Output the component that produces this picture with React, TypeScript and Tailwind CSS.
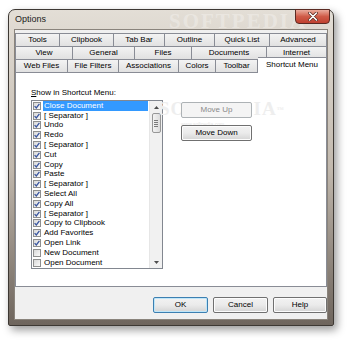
import React from 'react'

const rowOne = [
    { label: 'Tools', w: 'w-[45px]' },
    { label: 'Clipbook', w: 'w-[54px]' },
    { label: 'Tab Bar', w: 'w-[51px]' },
    { label: 'Outline', w: 'w-[50px]' },
    { label: 'Quick List', w: 'w-[55px]' },
    { label: 'Advanced', w: 'w-[57px]' },
]

const rowTwo = [
    { label: 'View', w: 'w-[58px]' },
    { label: 'General', w: 'w-[62px]' },
    { label: 'Files', w: 'w-[57px]' },
    { label: 'Documents', w: 'w-[75px]' },
    { label: 'Internet', w: 'w-[60px]' },
]

const rowThree = [
    { label: 'Web Files', w: 'w-[53px]' },
    { label: 'File Filters', w: 'w-[51px]' },
    { label: 'Associations', w: 'w-[60px]' },
    { label: 'Colors', w: 'w-[37px]' },
    { label: 'Toolbar', w: 'w-[42px]' },
]

const items = [
    { label: 'Close Document', checked: true },
    { label: '[ Separator ]', checked: true },
    { label: 'Undo', checked: true },
    { label: 'Redo', checked: true },
    { label: '[ Separator ]', checked: true },
    { label: 'Cut', checked: true },
    { label: 'Copy', checked: true },
    { label: 'Paste', checked: true },
    { label: '[ Separator ]', checked: true },
    { label: 'Select All', checked: true },
    { label: 'Copy All', checked: true },
    { label: '[ Separator ]', checked: true },
    { label: 'Copy to Clipbook', checked: true },
    { label: 'Add Favorites', checked: true },
    { label: 'Open Link', checked: true },
    { label: 'New Document', checked: false },
    { label: 'Open Document', checked: false },
]

function TabRow({ tabs, children }: { tabs: { label: string; w: string }[]; children?: React.ReactNode }) {
    return (
        <div className="flex h-[13px] items-start">
            {tabs.map((t, i) => (
                <div
                    key={t.label}
                    className={`${t.w} h-[13px] flex items-center justify-center border-t border-r border-[#898c95] bg-gradient-to-b from-[#f3f3f3] to-[#e1e1e1] text-[8px] leading-none ${i === 0 ? 'border-l' : ''}`}
                >
                    {t.label}
                </div>
            ))}
            {children}
        </div>
    )
}

function CheckBox({ checked }: { checked: boolean }) {
    return (
        <span className="w-[8px] h-[8px] shrink-0 border border-[#8e8f8f] bg-gradient-to-br from-[#d8d8d8] to-[#fbfbfb] flex items-center justify-center">
            {checked && (
                <svg width="6" height="6" viewBox="0 0 6 6">
                    <path d="M0.6 3.1 L2.3 4.9 L5.4 0.9" stroke="#3a57a0" strokeWidth="1.3" fill="none" />
                </svg>
            )}
        </span>
    )
}

function WinButton({ children, disabled, primary, className }: { children: React.ReactNode; disabled?: boolean; primary?: boolean; className?: string }) {
    const tone = disabled
        ? 'border-[#adb2b5] bg-[#f4f4f4] text-[#8a8a8a]'
        : primary
          ? 'border-[#3c7fb1] bg-gradient-to-b from-[#f2f2f2] via-[#ebebeb] to-[#d4d4d4] shadow-[inset_0_0_0_1px_#bfe6f9] text-black'
          : 'border-[#707070] bg-gradient-to-b from-[#f2f2f2] via-[#ebebeb] to-[#d4d4d4] shadow-[inset_0_0_0_1px_#fcfcfc] text-black'
    return (
        <div className={`h-[16px] rounded-[2px] border flex items-center justify-center text-[8px] leading-none ${tone} ${className ?? ''}`}>
            {children}
        </div>
    )
}

export default function App() {
    return (
        <div className="w-[350px] h-[341px] bg-white pl-[8px] pt-[9px] overflow-hidden font-['Liberation_Sans',Arial,sans-serif] text-black">
            <div className="w-[326px] h-[317px] rounded-t-[7px] rounded-b-[2px] border border-[#3d3833] bg-gradient-to-b from-[#e3ded6] via-[#c2b9ae] to-[#6e655d] shadow-[3px_4px_8px_rgba(0,0,0,0.4)] flex flex-col">

                {/* title bar */}
                <div className="h-[19px] flex justify-between relative">
                    <span className="pl-[6px] pt-[5px] text-[9px] leading-none text-[#1b1b1b]">Options</span>
                    <span className="absolute left-[160px] top-[1px] text-[21px] leading-none font-bold tracking-[2px] text-white/30 font-['Liberation_Serif',serif]">SOFTPEDIA</span>
                    <div className="mr-[3px] -mt-[1px] w-[35px] h-[15px] rounded-b-[4px] border border-[#5a2a22] bg-gradient-to-b from-[#e9ab9d] via-[#cf5b48] to-[#c0402f] flex items-center justify-center relative">
                        <svg width="10" height="9" viewBox="0 0 10 9">
                            <path d="M1.5 1 L8.5 8 M8.5 1 L1.5 8" stroke="#5a2a22" strokeWidth="3" strokeLinecap="round" />
                            <path d="M1.5 1 L8.5 8 M8.5 1 L1.5 8" stroke="#ffffff" strokeWidth="1.6" strokeLinecap="round" />
                        </svg>
                    </div>
                </div>

                {/* client area */}
                <div className="mx-[5px] w-[314px] h-[291px] border border-[#8a847c] bg-[#f0f0f0] pt-[3px] flex flex-col">
                    <div className="flex flex-col">
                        <TabRow tabs={rowOne} />
                        <TabRow tabs={rowTwo} />
                        <TabRow tabs={rowThree}>
                            <div className="w-[69px] h-[16px] -mt-[2px] relative z-10 bg-white border-t border-r border-[#898c95] flex items-center justify-center text-[8px] leading-none pb-[1px]">
                                Shortcut Menu
                            </div>
                        </TabRow>
                    </div>

                    <div className="h-[215px] border border-[#898c95] bg-white pl-[15px] pt-[15px] relative">
                        <div className="h-[10px] text-[8px] leading-[10px]">
                            <span className="underline">S</span>how in Shortcut Menu:
                        </div>
                        <div className="flex mt-[2px]">
                            <div className="w-[132px] h-[169px] border border-[#828790] flex">
                                <div className="w-[117px] flex flex-col">
                                    {items.map((it, i) => (
                                        <div key={i} className="h-[9.8px] flex items-center pl-[1px] text-[8px] leading-none">
                                            <CheckBox checked={it.checked} />
                                            <span className={`ml-[2px] mr-[1px] flex-1 h-full flex items-center pl-[1px] ${i === 0 ? 'bg-[#3399ff] text-white' : ''}`}>
                                                {it.label}
                                            </span>
                                        </div>
                                    ))}
                                </div>
                                <div className="w-[13px] bg-[#f1f1f1] border-l border-[#e6e6e6] flex flex-col items-center">
                                    <div className="h-[12px] w-full flex items-center justify-center">
                                        <svg width="5" height="3" viewBox="0 0 5 3"><path d="M0 3 L2.5 0 L5 3 Z" fill="#4d4d4d" /></svg>
                                    </div>
                                    <div className="w-[9px] h-[20px] rounded-[2px] border border-[#979797] bg-gradient-to-r from-[#f3f3f3] to-[#dcdcdc] flex flex-col items-center justify-center gap-[1px]">
                                        <span className="w-[4px] h-[1px] bg-[#7a7a7a]" />
                                        <span className="w-[4px] h-[1px] bg-[#7a7a7a]" />
                                        <span className="w-[4px] h-[1px] bg-[#7a7a7a]" />
                                        <span className="w-[4px] h-[1px] bg-[#7a7a7a]" />
                                    </div>
                                    <div className="flex-1" />
                                    <div className="h-[12px] w-full flex items-center justify-center">
                                        <svg width="5" height="3" viewBox="0 0 5 3"><path d="M0 0 L2.5 3 L5 0 Z" fill="#4d4d4d" /></svg>
                                    </div>
                                </div>
                            </div>

                            <div className="ml-[18px] mt-[2px] w-[71px] flex flex-col gap-[7px] relative">
                                <span className="absolute -left-[22px] top-[-3px] text-[19px] leading-none font-bold tracking-[1px] text-[#eeeeee] font-['Liberation_Serif',serif] whitespace-nowrap">
                                    SOFTPEDIA<sup className="text-[7px]">™</sup>
                                </span>
                                <span className="absolute left-[0px] top-[20px] text-[5px] leading-none text-[#e6e6e6] whitespace-nowrap">www.softpedia.com</span>
                                <WinButton disabled className="relative">Move Up</WinButton>
                                <WinButton className="relative">Move Down</WinButton>
                            </div>
                        </div>
                    </div>

                    <div className="mt-[10px] flex justify-end gap-[5px]">
                        <WinButton primary className="w-[55px]">OK</WinButton>
                        <WinButton className="w-[55px]">Cancel</WinButton>
                        <WinButton className="w-[54px]">Help</WinButton>
                    </div>
                </div>
            </div>
        </div>
    )
}
